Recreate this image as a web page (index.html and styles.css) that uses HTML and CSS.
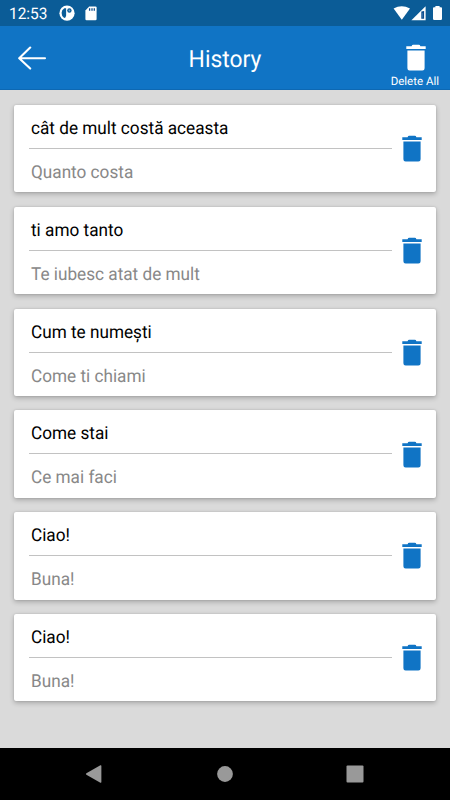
FILE: index.html
```html
<!DOCTYPE html>
<html lang="en">
<head>
<meta charset="utf-8">
<title>History</title>
<link rel="stylesheet" href="styles.css">
</head>
<body>
<svg width="0" height="0" class="defs">
  <symbol id="trash" viewBox="0 0 20 27">
    <path d="M0.3 2.2H5.6Q6 .8 7.2 .8H12.8Q14 .8 14.4 2.2H19.7V5H0.3ZM1.4 6.4H18.6V24.2Q18.6 26.4 16.4 26.4H3.6Q1.4 26.4 1.4 24.2Z" fill="currentColor"/>
  </symbol>
</svg>
<div class="screen">
  <div class="status">
    <span class="time">12:53</span>
    <svg class="app-dot" width="16" height="16" viewBox="0 0 16 16">
      <circle cx="8" cy="8.2" r="7.6" fill="#fff"/>
      <path d="M7.1 3.2V10.5Q7.1 13 5.2 12.9Q2.6 11.5 2.6 8Q2.6 4.6 5.3 3.2Z" fill="#0b5c97"/>
      <circle cx="10.4" cy="5.5" r="2.2" fill="#0b5c97"/>
      <circle cx="10.4" cy="5.5" r=".9" fill="#6fa3cc"/>
    </svg>
    <svg class="sd" width="12" height="15" viewBox="0 0 12 15">
      <path d="M4.2 .4H10.4Q11.6 .4 11.6 1.6V13Q11.6 14.3 10.4 14.3H1.6Q.4 14.3 .4 13V4.4Z" fill="#fff"/>
      <path d="M4.6 2.2V4.7M7 2.2V4.7M9.3 2.2V4.7" stroke="#0b4c8d" stroke-width="1.3"/>
    </svg>
    <svg class="signals" width="50" height="16" viewBox="0 0 50 16">
      <path d="M.6 3.6Q8.7-1.2 17 3.6L8.8 14.8Z" fill="#fff"/>
      <path d="M18.4 15.2L32.6 1.2V15.2Z" fill="#fff"/>
      <path d="M28.3 6.6V13.8H31.1V6Z" fill="#0b4c8d"/>
      <path d="M29.6 8V12.7" stroke="#3d79b0" stroke-width=".8"/>
      <path d="M42.4 1H46.6V2.2H48Q49 2.2 49 3.2V13.8Q49 15 47.8 15H41.2Q40 15 40 13.8V3.2Q40 2.2 41 2.2H42.4Z" fill="#fff"/>
    </svg>
  </div>
  <header class="bar">
    <svg class="back" width="28" height="24" viewBox="0 0 28 24">
      <path d="M27 12.2H1.4M12.2 1.6L1.2 12.2L12.2 22.6" fill="none" stroke="#fff" stroke-width="2.1" stroke-linecap="round" stroke-linejoin="round"/>
    </svg>
    <h1>History</h1>
    <div class="delete-all">
      <svg width="20" height="27"><use href="#trash"/></svg>
      <span>Delete All</span>
    </div>
  </header>
  <main class="list">
    <article class="card"><div class="pair"><p class="source"><span>cât de mult costă aceasta</span></p><p class="result"><span>Quanto costa</span></p></div><svg class="trash" width="20" height="27"><use href="#trash"/></svg></article>
    <article class="card"><div class="pair"><p class="source"><span>ti amo tanto</span></p><p class="result"><span>Te iubesc atat de mult</span></p></div><svg class="trash" width="20" height="27"><use href="#trash"/></svg></article>
    <article class="card"><div class="pair"><p class="source"><span>Cum te numești</span></p><p class="result"><span>Come ti chiami</span></p></div><svg class="trash" width="20" height="27"><use href="#trash"/></svg></article>
    <article class="card"><div class="pair"><p class="source"><span>Come stai</span></p><p class="result"><span>Ce mai faci</span></p></div><svg class="trash" width="20" height="27"><use href="#trash"/></svg></article>
    <article class="card"><div class="pair"><p class="source"><span>Ciao!</span></p><p class="result"><span>Buna!</span></p></div><svg class="trash" width="20" height="27"><use href="#trash"/></svg></article>
    <article class="card"><div class="pair"><p class="source"><span>Ciao!</span></p><p class="result"><span>Buna!</span></p></div><svg class="trash" width="20" height="27"><use href="#trash"/></svg></article>
  </main>
  <nav class="nav">
    <svg width="18" height="20" viewBox="0 0 18 20"><path d="M1.4 9.2Q.4 10 1.4 10.7L15.4 18.7Q16.4 19 16.4 18V2Q16.4 1 15.4 1.3Z" fill="#999"/></svg>
    <svg width="18" height="20" viewBox="0 0 18 20"><circle cx="9" cy="10" r="7.9" fill="#999"/></svg>
    <svg width="18" height="20" viewBox="0 0 18 20"><rect x=".5" y="1.5" width="17" height="17" rx="1" fill="#999"/></svg>
  </nav>
</div>
</body>
</html>
```

FILE: styles.css
```css
* { box-sizing: border-box; }
body { margin: 0; font-family: Roboto, "Noto Sans", sans-serif; text-rendering: geometricPrecision; }
h1, p { margin: 0; font-weight: 400; }
svg { display: block; flex: none; }
.defs { position: absolute; }
.screen {
  width: 450px;
  height: 800px;
  display: flex;
  flex-direction: column;
  overflow: hidden;
  background: #dadada;
}
.status {
  height: 26px;
  display: flex;
  align-items: center;
  padding: 0 7px 0 9px;
  background: #0b5c97;
  color: #fff;
}
.time {
  width: 50px;
  font-size: 16px;
  line-height: 26px;
  padding-top: 1px;
  transform: scaleX(.965);
  transform-origin: 0 50%;
}
.sd { margin-left: 10px; }
.signals { margin-left: auto; }
.bar {
  height: 64px;
  display: grid;
  grid-template-columns: 80px 1fr 80px;
  align-items: center;
  background: #1074c5;
  border-bottom: 1px solid #0d68b3;
  color: #fff;
}
.back { margin-left: 18px; }
h1 {
  font-size: 23.6px;
  line-height: 30px;
  text-align: center;
  padding-top: 4px;
  transform: translateY(-.7px) scaleX(.97);
}
.delete-all {
  height: 63px;
  padding: 18px 11px 0 0;
  display: flex;
  flex-direction: column;
  align-items: flex-end;
}
.delete-all svg { margin-right: 13px; }
.delete-all span { font-size: 11.5px; line-height: 14px; margin-top: 3px; white-space: nowrap; }
.list {
  flex: 1;
  display: flex;
  flex-direction: column;
  gap: 14.45px;
  padding: 14.9px 14px 0;
}
.card {
  height: 87.4px;
  flex: none;
  display: flex;
  align-items: center;
  padding: 0 14px 0 15px;
  background: #fff;
  border-radius: 2px;
  box-shadow: 0 2px 5px rgba(0, 0, 0, .24), 0 0 2px rgba(0, 0, 0, .14);
}
.pair { width: 363px; }
.pair p { height: 43.3px; padding: 0 2px; font-size: 17.8px; white-space: nowrap; }
.pair span { display: inline-block; transform: translateY(.15px) scaleX(.966); transform-origin: 0 50%; }
.pair .source { height: 44.1px; border-bottom: 1px solid #c2c2c2; line-height: 47.4px; color: #000; }
.pair .result { line-height: 48.4px; color: #888; }
.trash { margin-left: 10px; color: #1074c5; }
.nav {
  height: 52.5px;
  display: flex;
  justify-content: space-between;
  align-items: center;
  padding: 0 86px 0 85px;
  background: #000;
}
```
